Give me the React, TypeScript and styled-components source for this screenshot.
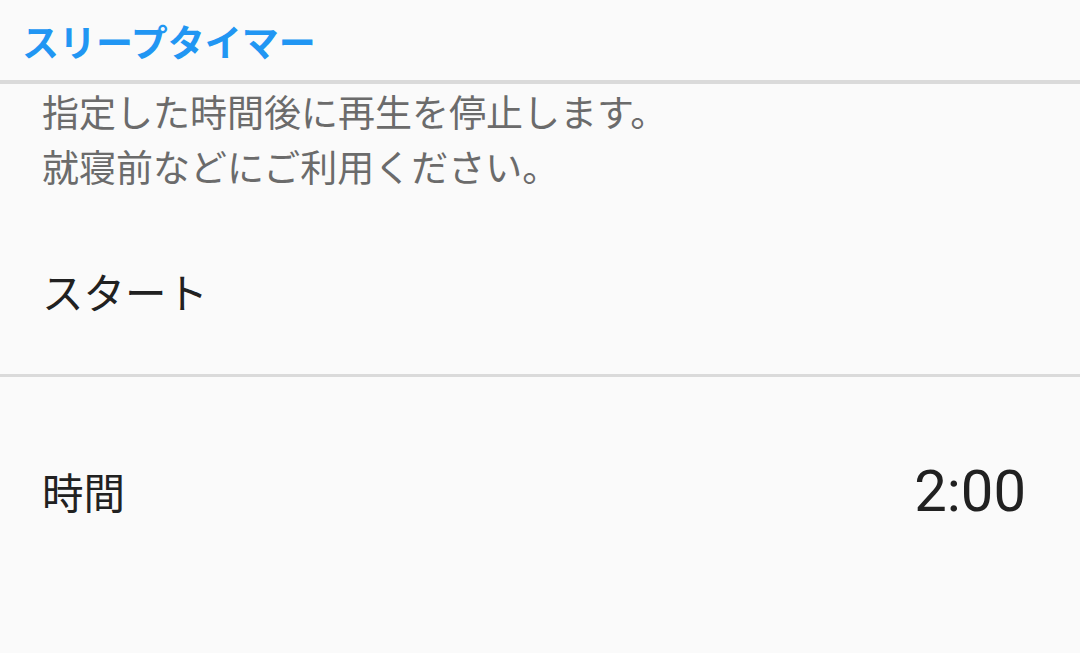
import React from 'react';
import styled, { createGlobalStyle } from 'styled-components';

const GlobalStyle = createGlobalStyle`
  html, body {
    margin: 0;
    padding: 0;
    background: #fafafa;
  }
  body {
    font-family: 'Noto Sans CJK JP', 'Noto Sans', Roboto, sans-serif;
  }
`;

interface RowProps {
  label: string;
  value?: string;
  height: number;
}

function SettingRow(props: RowProps) {
  const { label, value, height } = props;
  return (
    <Row height={height}>
      <RowLabel>{label}</RowLabel>
      {value && <RowValue>{value}</RowValue>}
    </Row>
  );
}

function App() {
  return (
    <Page>
      <GlobalStyle />
      <Header>
        <Title>スリープタイマー</Title>
      </Header>
      <Description>
        指定した時間後に再生を停止します。
        <br />
        就寝前などにご利用ください。
      </Description>
      <SettingRow label='スタート' height={166} />
      <Divider />
      <SettingRow label='時間' value='2:00' height={228} />
    </Page>
  );
}

const Page = styled.div`
  width: 1080px;
  height: 653px;
  overflow: hidden;
  background: #fafafa;
`;

const Header = styled.header`
  display: flex;
  align-items: center;
  height: 80px;
  padding: 0 22px;
  border-bottom: 4px solid #dadada;
  box-sizing: content-box;
`;

const Title = styled.h1`
  margin: 0;
  padding-top: 2px;
  font-size: 37px;
  font-weight: 700;
  color: #2196f3;
`;

const Description = styled.p`
  margin: 0;
  padding: 0 42px;
  height: 124px;
  font-size: 37px;
  line-height: 55px;
  color: #6b6b6b;
`;

const Row = styled.div<{ height: number }>`
  display: flex;
  align-items: center;
  justify-content: space-between;
  height: ${(props) => props.height}px;
  padding: 0 54px 0 42px;
`;

const RowLabel = styled.span`
  font-size: 41.5px;
  color: #212121;
`;

const RowValue = styled.span`
  font-family: Roboto, 'Noto Sans', sans-serif;
  font-size: 58px;
  color: #212121;
`;

const Divider = styled.hr`
  margin: 0;
  height: 3px;
  border: none;
  background: #dadada;
`;

export default App;
